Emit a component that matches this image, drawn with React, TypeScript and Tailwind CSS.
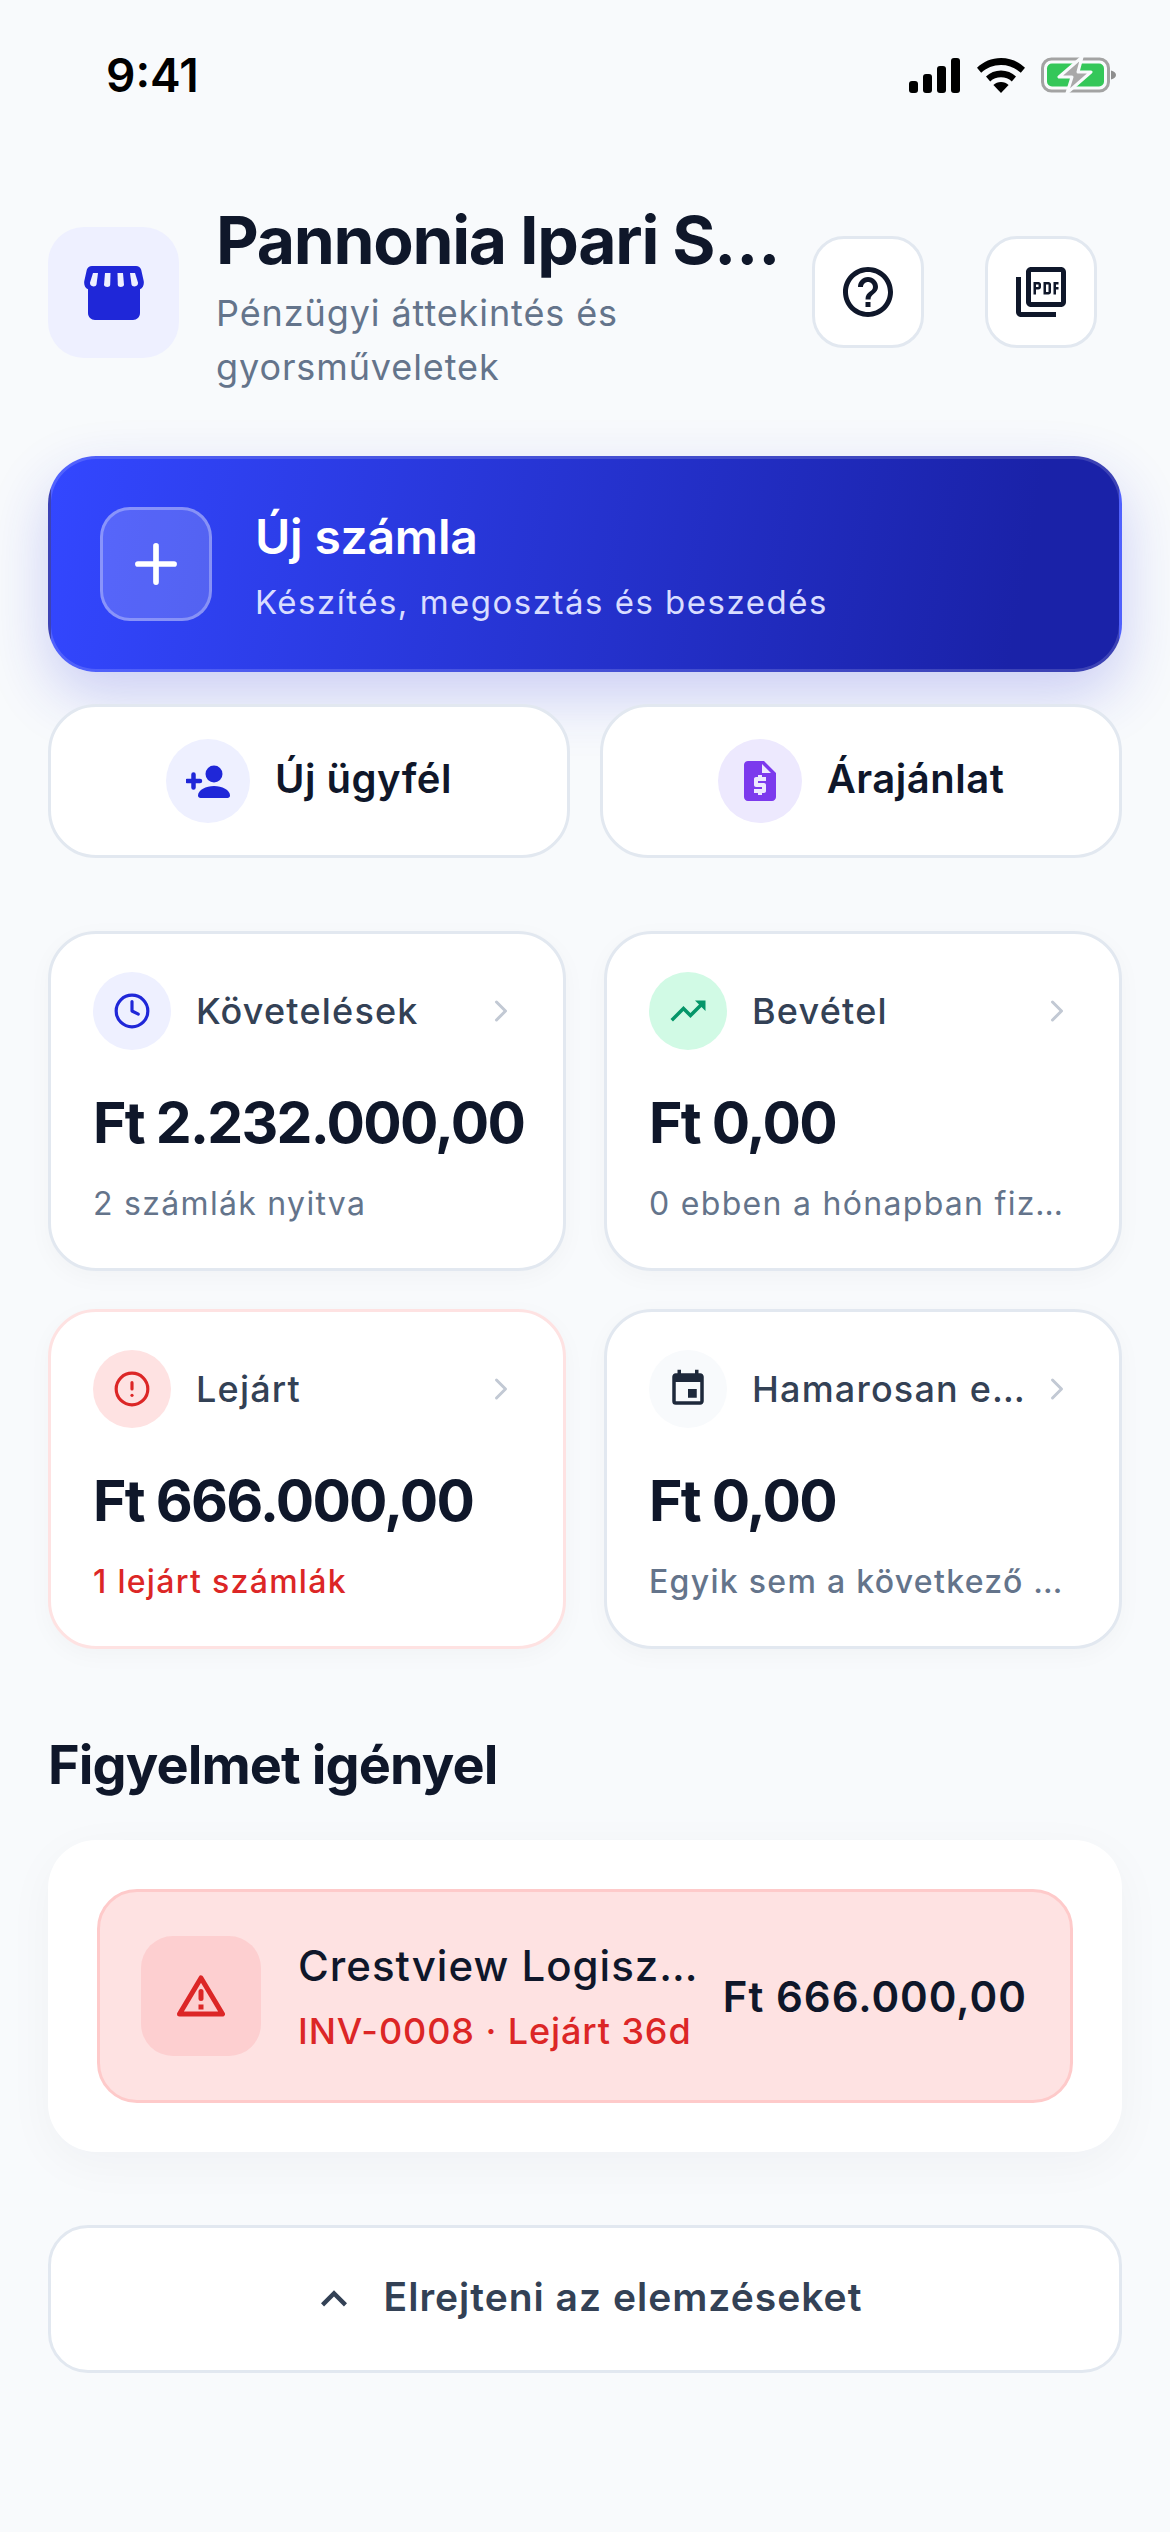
import { ChevronRight, CircleAlert, Clock, Plus } from "lucide-react";
import {
  MdEvent,
  MdExpandLess,
  MdHelpOutline,
  MdOutlinePictureAsPdf,
  MdRequestQuote,
  MdTrendingUp,
} from "react-icons/md";

function StatusBar() {
  return (
    <div className="flex h-[227px] items-start justify-between pl-[106px] pr-[53px] pt-[47px]">
      <span className="text-[46px] font-semibold leading-[56px] text-black">9:41</span>
      <div className="flex items-center gap-[17px] pt-[9px]">
        <svg width="51" height="35" viewBox="0 0 51 35" fill="#000">
          <rect x="0" y="23" width="9" height="12" rx="3" />
          <rect x="14" y="16" width="9" height="19" rx="3" />
          <rect x="28" y="8" width="9" height="27" rx="3" />
          <rect x="42" y="0" width="9" height="35" rx="3" />
        </svg>
        <svg width="48" height="35" viewBox="0 0 48 35" fill="#000">
          <path d="M24 0c9.500 0 17.600 3.700 24 9.700l-4.200 5C38.500 9.900 31.700 7 24 7S9.500 9.900 4.200 14.700L0 9.700C6.400 3.700 14.500 0 24 0z" />
          <path d="M24 12.500c5.800 0 11 2.200 15 5.900l-4.200 5C31.900 20.800 28.100 19.300 24 19.300s-7.900 1.500-10.800 4.100L9 18.400c4-3.700 9.200-5.900 15-5.900z" />
          <path d="M24 24c3 0 5.600 1.100 7.600 2.900L24 35l-7.600-8.100C18.400 25.100 21 24 24 24z" />
        </svg>
        <svg width="76" height="38" viewBox="0 0 76 38" fill="none" className="-ml-[1px]">
          <rect x="1.500" y="3" width="66" height="32" rx="9" stroke="#a3a3a3" strokeWidth="3" />
          <rect x="6" y="7.500" width="57" height="23" rx="5" fill="#34c759" />
          <path d="M70 14.500c3 .6 5 2.300 5 4.500s-2 3.900-5 4.500z" fill="#8e8e8e" />
          <path d="M41 1L18 21h13l-5 16 24-21H37z" fill="#a9a9a9" stroke="#f8fafc" strokeWidth="3" strokeLinejoin="round" />
        </svg>
      </div>
    </div>
  );
}

// filled shop front, the stock icon sets only have the outlined one
function StoreIcon() {
  return (
    <svg width="60" height="54" viewBox="0 0 60 54">
      <path
        d="M8 0h44c2.500 0 4.500 1.500 5.200 3.800L59.700 15c.6 3.500-.7 6.800-3.700 8.300V47c0 3.900-3.100 7-7 7H11c-3.900 0-7-3.100-7-7V23.300C1 21.800-.3 18.500.3 15L2.800 3.800C3.500 1.500 5.500 0 8 0z"
        fill="#1f27d8"
      />
      <path d="M9 7h5l-1.500 11.500c-.4 2.500-4.700 2.500-6 .5-.5-.8-.6-1.800-.4-2.800z" fill="#eef0ff" />
      <path d="M21 7h5.500l-.3 12c-.1 2.600-5.700 2.600-6.200 0z" fill="#eef0ff" />
      <path d="M33.500 7H39l1 12c-.5 2.600-6.100 2.600-6.200 0z" fill="#eef0ff" />
      <path d="M46 7h5l2.900 9.200c.2 1 .1 2-.4 2.800-1.300 2-5.600 2-6 -.5z" fill="#eef0ff" />
    </svg>
  );
}

function PersonPlusIcon() {
  return (
    <svg width="45" height="33" viewBox="0 0 45 33" fill="#1f27d8">
      <circle cx="28" cy="9" r="8.500" />
      <path d="M12 30.500C12 25 20 21 28 21s16 4 16 9.500c0 1.500-1 2.500-2.500 2.500h-27c-1.500 0-2.500-1-2.500-2.500z" />
      <path d="M7.500 9.500v13M1 16h13" stroke="#1f27d8" strokeWidth="4.500" strokeLinecap="round" fill="none" />
    </svg>
  );
}

function WarningIcon() {
  return (
    <svg width="48" height="42" viewBox="0 0 48 42" fill="none">
      <path d="M24 3L45.500 39H2.500z" stroke="#dc2626" strokeWidth="5" strokeLinejoin="round" />
      <rect x="21.500" y="14" width="5" height="12" rx="2.500" fill="#dc2626" />
      <rect x="21.500" y="29.500" width="5" height="5" fill="#dc2626" />
    </svg>
  );
}

function Header() {
  return (
    <div className="flex items-start px-[48px]">
      <div className="flex h-[131px] w-[131px] shrink-0 items-center justify-center rounded-[36px] bg-[#eef0ff]">
        <StoreIcon />
      </div>
      <div className="ml-[37px] -mt-[27px] w-[570px] shrink-0">
        <div className="truncate text-[66px] font-bold leading-[80px] tracking-[-1.3px] text-[#0f172a]">
          Pannonia Ipari Szolgáltató
        </div>
        <div className="mt-[6px] text-[36px] leading-[54px] tracking-[0.9px] text-[#64748b]">
          Pénzügyi áttekintés és gyorsműveletek
        </div>
      </div>
      <div className="ml-[26px] mt-[9px] flex gap-[61px]">
        <button className="flex h-[112px] w-[112px] items-center justify-center rounded-[32px] border-[3px] border-[#e2e8f0] bg-white">
          <MdHelpOutline size={60} color="#0f172a" />
        </button>
        <button className="flex h-[112px] w-[112px] items-center justify-center rounded-[32px] border-[3px] border-[#e2e8f0] bg-white">
          <MdOutlinePictureAsPdf size={60} color="#0f172a" />
        </button>
      </div>
    </div>
  );
}

function StatCard({ icon, iconBg, label, value, sub, subClass, danger }: {
  icon: React.ReactNode;
  iconBg: string;
  label: string;
  value: string;
  sub: string;
  subClass: string;
  danger?: boolean;
}) {
  return (
    <div className={`flex h-[340px] min-w-0 flex-col rounded-[48px] border-[3px] bg-white pl-[42px] pr-[44px] pt-[38px] shadow-[0_6px_24px_rgba(15,23,42,0.03)] ${danger ? "border-[#fee2e2]" : "border-[#e2e8f0]"}`}>
      <div className="flex items-center">
        <div className={`flex h-[78px] w-[78px] shrink-0 items-center justify-center rounded-full ${iconBg}`}>
          {icon}
        </div>
        <span className="ml-[25px] min-w-0 flex-1 truncate text-[36px] font-medium leading-[44px] tracking-[1.2px] text-[#334155]">
          {label}
        </span>
        <ChevronRight size={36} color="#c2c9d4" strokeWidth={2} className="ml-[10px] shrink-0" />
      </div>
      <div className="mt-[38px] whitespace-nowrap text-[57px] font-bold leading-[70px] tracking-[-1.7px] text-[#0f172a]">
        {value}
      </div>
      <div className={`mr-[12px] mt-[24px] truncate text-[32px] leading-[44px] tracking-[1.3px] ${subClass}`}>
        {sub}
      </div>
    </div>
  );
}

export default function App() {
  return (
    <div className="h-[2532px] bg-[#f8fafc] font-['Inter',sans-serif]">
      <StatusBar />
      <Header />

      <div className="mt-[62px] px-[48px]">
        <div className="flex h-[216px] items-center rounded-[48px] border-[3px] border-[#ffffff26] bg-linear-[100deg] from-[#3347ff] to-[#1a22a8] to-[90%] pl-[49px] shadow-[0_24px_60px_rgba(40,50,220,0.22)]">
          <div className="flex h-[114px] w-[112px] shrink-0 items-center justify-center rounded-[30px] border-[3px] border-[#ffffff4d] bg-[#ffffff2e]">
            <Plus size={62} color="#fff" strokeWidth={2.2} />
          </div>
          <div className="ml-[43px] pt-[2px]">
            <div className="text-[48px] font-semibold leading-[58px] tracking-[-0.2px] text-white">Új számla</div>
            <div className="mt-[15px] text-[33px] leading-[42px] tracking-[1.5px] text-[#d9ddff]">
              Készítés, megosztás és beszedés
            </div>
          </div>
        </div>

        <div className="mt-[32px] grid grid-cols-2 gap-[30px]">
          <button className="flex h-[154px] items-center justify-center gap-[25px] rounded-[48px] border-[3px] border-[#e2e8f0] bg-white">
            <span className="flex h-[84px] w-[84px] items-center justify-center rounded-full bg-[#eef0ff]">
              <PersonPlusIcon />
            </span>
            <span className="-mt-[4px] text-[40px] font-semibold tracking-[0.5px] text-[#0f172a]">Új ügyfél</span>
          </button>
          <button className="flex h-[154px] items-center justify-center gap-[25px] rounded-[48px] border-[3px] border-[#e2e8f0] bg-white">
            <span className="flex h-[84px] w-[84px] items-center justify-center rounded-full bg-[#ede9fe]">
              <MdRequestQuote size={48} color="#7c3aed" />
            </span>
            <span className="-mt-[4px] text-[40px] font-semibold tracking-[0.5px] text-[#0f172a]">Árajánlat</span>
          </button>
        </div>

        <div className="mt-[73px] grid grid-cols-2 gap-[38px]">
          <StatCard
            icon={<Clock size={38} color="#1f27d8" strokeWidth={2} />}
            iconBg="bg-[#eef0ff]"
            label="Követelések"
            value="Ft 2.232.000,00"
            sub="2 számlák nyitva"
            subClass="text-[#64748b]"
          />
          <StatCard
            icon={<MdTrendingUp size={42} color="#059669" />}
            iconBg="bg-[#d1fae5]"
            label="Bevétel"
            value="Ft 0,00"
            sub="0 ebben a hónapban fizetve"
            subClass="text-[#64748b]"
          />
          <StatCard
            icon={<CircleAlert size={38} color="#dc2626" strokeWidth={2} />}
            iconBg="bg-[#fee2e2]"
            label="Lejárt"
            value="Ft 666.000,00"
            sub="1 lejárt számlák"
            subClass="font-medium text-[#dc2626]"
            danger
          />
          <StatCard
            icon={<MdEvent size={42} color="#1e293b" />}
            iconBg="bg-[#f8fafc]"
            label="Hamarosan esedékes"
            value="Ft 0,00"
            sub="Egyik sem a következő 7 napban"
            subClass="font-medium text-[#64748b]"
          />
        </div>

        <h2 className="mt-[84px] text-[54px] font-bold leading-[64px] tracking-[-0.9px] text-[#0f172a]">
          Figyelmet igényel
        </h2>

        <div className="mt-[43px] rounded-[48px] bg-white p-[49px] shadow-[0_12px_48px_rgba(15,23,42,0.04)]">
          <div className="flex h-[214px] items-center rounded-[40px] border-[3px] border-[#fecaca] bg-[#fee2e2] pl-[41px] pr-[43px]">
            <div className="flex h-[120px] w-[120px] shrink-0 items-center justify-center rounded-[32px] bg-[#fdcfd0]">
              <WarningIcon />
            </div>
            <div className="ml-[37px] w-[400px] min-w-0">
              <div className="truncate text-[42px] font-medium leading-[52px] tracking-[1px] text-[#0f172a]">
                Crestview Logisztika Kft.
              </div>
              <div className="mt-[17px] whitespace-nowrap text-[36px] font-medium leading-[44px] tracking-[0.9px] text-[#dc2626]">
                INV-0008 · Lejárt 36d
              </div>
            </div>
            <div className="ml-auto whitespace-nowrap text-[42px] font-semibold tracking-[1px] text-[#0f172a]">
              Ft 666.000,00
            </div>
          </div>
        </div>

        <button className="mt-[73px] flex h-[148px] w-full items-center justify-center gap-[24px] rounded-[40px] border-[3px] border-[#e2e8f0] bg-white">
          <MdExpandLess size={52} color="#334155" />
          <span className="-mt-[3px] text-[39px] font-semibold tracking-[1px] text-[#334155]">Elrejteni az elemzéseket</span>
        </button>
      </div>
    </div>
  );
}
